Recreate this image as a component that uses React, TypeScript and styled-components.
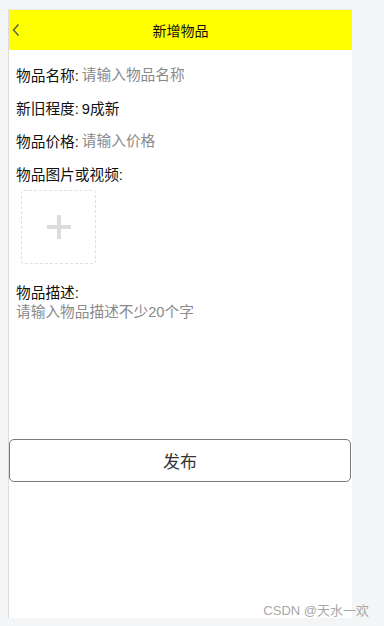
import React from "react"
import styled, { createGlobalStyle } from "styled-components"

const GlobalStyle = createGlobalStyle`
html, body {
    margin: 0;
    padding: 0;
    background-color: #f4f5f6;
    font-family: "Liberation Sans", "Noto Sans CJK SC", sans-serif;
}
`

const Page = styled.div`
position: relative;
width: 384px;
height: 626px;
padding: 9px 0 0 8px;
box-sizing: border-box;
`

const Phone = styled.div`
width: 344px;
height: 609px;
box-sizing: border-box;
border-left: 1px solid #dcdcdc;
border-top: 1px solid #e8e8e8;
background-color: #fff;
display: flex;
flex-direction: column;
`

const Header = styled.div`
height: 40px;
background-color: #ffff00;
display: grid;
grid-template-columns: 30px 1fr 30px;
align-items: center;
`

const BackButton = styled.div`
display: flex;
align-items: center;
padding-left: 3px;
height: 100%;
`

const Title = styled.div`
text-align: center;
font-size: 14px;
color: #111;
`

const Form = styled.div`
padding: 8px 0 0 7px;
display: flex;
flex-direction: column;
color: #111;
font-size: 14.7px;
`

const Row = styled.div`
height: 33px;
display: flex;
align-items: center;
`

const Label = styled.span`
white-space: nowrap;
margin-right: 3px;
`

const Field = styled.input`
border: none;
outline: none;
padding: 0;
flex: 1;
font: inherit;
color: #111;
background: transparent;
&::placeholder {
    color: #8a8a8a;
}
`

const Value = styled.span``

const Upload = styled.div`
width: 75px;
height: 74px;
margin-left: 5px;
box-sizing: border-box;
border: 1px dashed #e0e0e0;
border-radius: 3px;
display: flex;
align-items: center;
justify-content: center;
`

const DescLabel = styled.div`
margin-top: 20px;
line-height: 19px;
`

const Desc = styled.textarea`
border: none;
outline: none;
resize: none;
padding: 0;
margin: 0;
height: 120px;
font: inherit;
line-height: 19px;
background: transparent;
&::placeholder {
    color: #8a8a8a;
}
`

const Submit = styled.button`
margin-top: 16px;
width: 342px;
height: 43px;
border: 1px solid #7a7a7a;
border-radius: 5px;
background-color: #fff;
font-family: "Liberation Sans", "Noto Sans CJK SC", sans-serif;
font-size: 17px;
color: #333;
`

const Watermark = styled.div`
position: absolute;
right: 15px;
bottom: 7px;
font-size: 13px;
color: #a8a8a8;
`

const App = () => {
    return (
        <Page>
            <GlobalStyle />
            <Phone>
                <Header>
                    <BackButton>
                        <svg width="8" height="14" viewBox="0 0 8 14">
                            <path d="M6.5 1.5 L1.5 7 L6.5 12.5" fill="none" stroke="#555" strokeWidth="1.3" />
                        </svg>
                    </BackButton>
                    <Title>新增物品</Title>
                    <span />
                </Header>
                <Form>
                    <Row>
                        <Label>物品名称:</Label>
                        <Field placeholder="请输入物品名称" />
                    </Row>
                    <Row>
                        <Label>新旧程度:</Label>
                        <Value>9成新</Value>
                    </Row>
                    <Row>
                        <Label>物品价格:</Label>
                        <Field placeholder="请输入价格" />
                    </Row>
                    <Row>
                        <Label>物品图片或视频:</Label>
                    </Row>
                    <Upload>
                        <svg width="24" height="24" viewBox="0 0 24 24">
                            <rect x="10" y="0" width="4" height="24" fill="#dcdcdc" />
                            <rect x="0" y="10" width="24" height="4" fill="#dcdcdc" />
                        </svg>
                    </Upload>
                    <DescLabel>物品描述:</DescLabel>
                    <Desc placeholder="请输入物品描述不少20个字" />
                </Form>
                <Submit>发布</Submit>
            </Phone>
            <Watermark>CSDN @天水一欢</Watermark>
        </Page>
    )
}

export default App
